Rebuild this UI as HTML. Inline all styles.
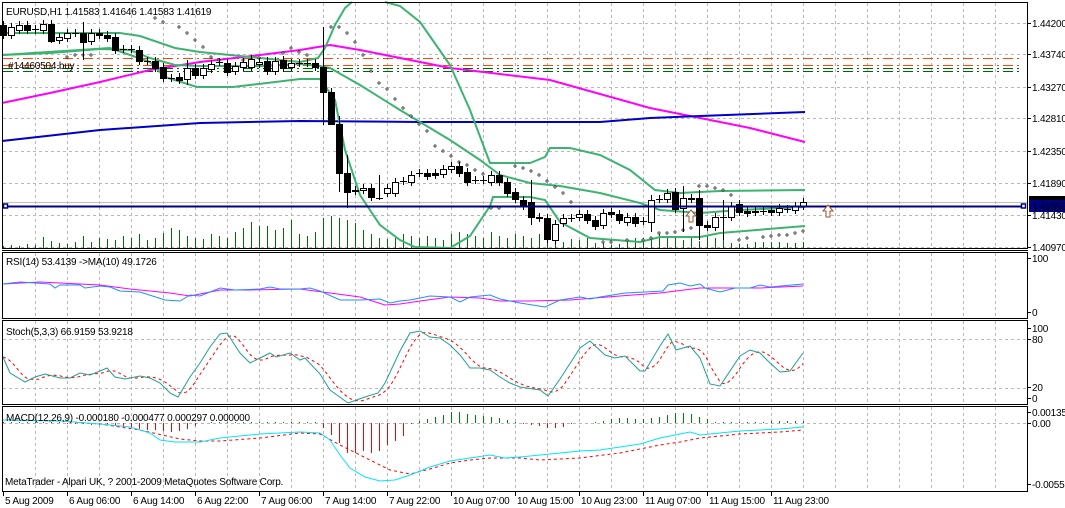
<!DOCTYPE html>
<html><head><meta charset="utf-8"><style>
html,body{margin:0;padding:0;background:#fff;width:1065px;height:508px;overflow:hidden}
svg{display:block}
text{font-family:"Liberation Sans","DejaVu Sans",sans-serif;font-size:10px;letter-spacing:-0.2px;fill:#000}
</style></head><body>
<svg id="s" width="1065" height="508" xmlns="http://www.w3.org/2000/svg">
<rect width="1065" height="508" fill="#fff"/>
<g id="grid"></g>
<g id="plots"></g>
<rect x="2.5" y="2.5" width="1025" height="246" fill="none" stroke="#000"/>
<line x1="2" y1="250.5" x2="1028" y2="250.5" stroke="#000"/>
<rect x="2.5" y="252.5" width="1025" height="66" fill="none" stroke="#000"/>
<rect x="2.5" y="320.5" width="1025" height="84" fill="none" stroke="#000"/>
<rect x="2.5" y="406.5" width="1025" height="85" fill="none" stroke="#000"/>
<text x="6" y="15">EURUSD,H1  1.41583 1.41646 1.41583 1.41619</text>
<text x="8" y="69" fill="#333">#14460504 buy</text>
<text x="6" y="265">RSI(14) 53.4139  -&gt;MA(10) 49.1726</text>
<text x="6" y="335">Stoch(5,3,3) 66.9159 53.9218</text>
<text x="6" y="421">MACD(12,26,9) -0.000180 -0.000477 0.000297 0.000000</text>
<text x="5" y="485">MetaTrader - Alpari UK, ? 2001-2009 MetaQuotes Software Corp.</text>
<g id="axis"></g>
</svg>
<script>
var NS="http://www.w3.org/2000/svg";
function el(p,t,a,txt){var e=document.createElementNS(NS,t);for(var k in a)e.setAttribute(k,a[k]);if(txt!=null)e.textContent=txt;document.getElementById(p).appendChild(e);return e;}
function pl(p,pts,c,w,da){var s=pts.map(function(q){return q[0]+","+q[1]}).join(" ");var a={points:s,fill:"none",stroke:c,"stroke-width":w||1};if(da)a["stroke-dasharray"]=da;el(p,"polyline",a);}
function interp(pts,x){for(var i=0;i<pts.length-1;i++){if(x>=pts[i][0]&&x<=pts[i+1][0]){var t=(x-pts[i][0])/(pts[i+1][0]-pts[i][0]||1);return pts[i][1]+t*(pts[i+1][1]-pts[i][1]);}}return pts[pts.length-1][1];}
var G="#b8b8b8";
for(var x=35;x<1027;x+=32){[[3,248],[253,318],[321,404],[407,491]].forEach(function(r){el("grid","line",{x1:x+.5,y1:r[0],x2:x+.5,y2:r[1],stroke:G,"stroke-dasharray":"3,3"});});}
[23,54,87,118,151,183,215,247,339,388,423].forEach(function(y){el("grid","line",{x1:3,y1:y+.5,x2:1027,y2:y+.5,stroke:G,"stroke-dasharray":"3,3"});});
var L=[["1.44200",23],["1.43740",54],["1.43270",87],["1.42810",118],["1.42350",151],["1.41890",183],["1.41430",215],["1.40970",247],["100",258],["0",312],["100",328],["80",339],["20",387],["0",398],["0.00135",412],["0.00",423],["-0.00558",484]];
L.forEach(function(l){el("axis","line",{x1:1028,y1:l[1]+.5,x2:1031,y2:l[1]+.5,stroke:"#000"});el("axis","text",{x:1032,y:l[1]+4},l[0]);});
el("axis","rect",{x:1029,y:196,width:36,height:9,fill:"#000"});
el("axis","text",{x:1032,y:205,fill:"#fff"},"1.41619");
el("axis","rect",{x:1029,y:200,width:36,height:12,fill:"#000080"});
el("axis","text",{x:1032,y:210,fill:"#fff"},"1.41553");
var T=["5 Aug 2009","6 Aug 06:00","6 Aug 14:00","6 Aug 22:00","7 Aug 06:00","7 Aug 14:00","7 Aug 22:00","10 Aug 07:00","10 Aug 15:00","10 Aug 23:00","11 Aug 07:00","11 Aug 15:00","11 Aug 23:00"];
T.forEach(function(t,i){var x=3+64*i;el("axis","line",{x1:x+.5,y1:492,x2:x+.5,y2:496,stroke:"#000"});el("axis","text",{x:x+2,y:504},t);});
el("plots","line",{x1:3,y1:58.5,x2:1022,y2:58.5,stroke:"#ff4500","stroke-dasharray":"10,4,2,4"});
el("plots","line",{x1:3,y1:65.5,x2:1022,y2:65.5,stroke:"#ff4500","stroke-dasharray":"10,4,2,4"});
el("plots","line",{x1:3,y1:68.5,x2:1022,y2:68.5,stroke:"#006400","stroke-dasharray":"10,4,2,4"});
el("plots","line",{x1:3,y1:71.5,x2:1022,y2:71.5,stroke:"#006400","stroke-dasharray":"10,4,2,4"});
el("plots","line",{x1:3,y1:202.5,x2:1027,y2:202.5,stroke:"#c0c0c0"});
var vol=[2,3,2,4,3,11,7,5,4,6,12,6,10,9,8,12,10,14,8,10,15,20,18,12,10,9,14,12,10,16,20,26,22,22,18,20,28,14,12,16,30,32,30,28,25,18,14,10,9,10,14,12,10,12,10,8,14,16,14,12,10,16,12,10,14,12,10,14,9,8,6,9,8,10,5,5,3,4,7,10,10,8,14,12,10,8,12,7,12,10,12,5,4,4,6,6,6,6,5,5,6];
vol.forEach(function(h,i){var x=3+8*i;el("plots","line",{x1:x+.5,y1:248,x2:x+.5,y2:248-h,stroke:"#007000"});});
pl("plots",[[2,103],[50,93],[100,82],[150,70],[200,62],[260,55],[300,50],[330,45],[360,50],[450,68],[550,80],[650,108],[700,118],[750,128],[805,142]],"#ff00ff",2);
pl("plots",[[2,141],[100,130],[200,123],[300,121],[420,122],[600,122],[650,118],[700,116],[805,112]],"#0000c8",2);
var BG="#3cb371";
pl("plots",[[2,33],[120,33],[140,36],[175,48],[200,52],[240,56],[280,60],[300,62],[318,58],[325,48],[335,25],[345,8],[352,2]],BG,2);
pl("plots",[[385,2],[400,6],[420,22],[450,65],[470,110],[490,163],[530,163],[545,157],[550,148],[570,148],[600,155],[630,170],[655,190],[680,193],[720,191],[805,190]],BG,2);
pl("plots",[[2,55],[50,53],[100,49],[130,50],[150,58],[175,65],[200,66],[260,66],[300,64],[320,66],[330,68],[360,85],[400,110],[450,140],[480,160],[500,175],[530,183],[560,186],[600,193],[640,203],[660,210],[700,213],[740,210],[805,207]],BG,2);
pl("plots",[[2,55],[110,48],[150,62],[165,77],[197,87],[233,87],[267,83],[300,79],[320,79],[335,100],[345,150],[360,195],[380,225],[400,240],[415,247],[450,248],[470,236],[490,206],[493,197],[530,197],[545,200],[560,222],[590,238],[640,242],[660,237],[700,237],[720,233],[805,226]],BG,2);
var sar=[[67,57],[75,55],[83,55],[91,55],[155,18],[163,22],[179,27],[187,33],[195,40],[203,47],[211,57],[219,60],[243,60],[251,60],[259,58],[283,53],[291,48],[299,52],[307,55],[331,27],[339,27],[347,33],[355,42],[363,55],[371,71],[379,83],[387,89],[395,99],[403,108],[411,116],[419,124],[427,131],[435,146],[443,151],[451,156],[459,162],[467,165],[475,170],[483,174],[491,208],[499,208],[515,166],[523,168],[531,171],[539,175],[547,181],[555,187],[563,193],[571,202],[603,242],[611,242],[627,240],[643,240],[651,238],[659,233],[667,233],[675,232],[683,230],[691,228],[699,186],[707,186],[715,188],[723,190],[731,195],[739,240],[747,238],[763,237],[771,236],[779,235],[787,235],[795,233],[803,231]];
sar.forEach(function(p){el("plots","rect",{x:p[0]-1,y:p[1]-1,width:2,height:2,fill:"#fff",stroke:"#000","stroke-width":0.6,transform:"rotate(45 "+p[0]+" "+p[1]+")"});});
var C=[[25,35,'b'],[27,35,'w'],[25,30,'w'],[25,30,'b'],[29,30,'d'],[24,30,'w'],[24,41,'b'],[37,40,'w'],[33,38,'w'],[33,33,'d'],[33,42,'b'],[33,41,'w'],[33,35,'b'],[35,38,'b'],[37,50,'b'],[49,49,'d'],[49,49,'d'],[50,61,'b'],[61,61,'d'],[61,68,'b'],[67,78,'b'],[78,78,'d'],[77,80,'b'],[68,79,'w'],[68,75,'b'],[68,75,'w'],[64,69,'w'],[62,62,'d'],[63,72,'b'],[66,71,'w'],[62,67,'w'],[59,67,'w'],[62,64,'w'],[61,71,'b'],[61,71,'w'],[60,68,'b'],[63,67,'w'],[63,63,'d'],[63,63,'d'],[63,67,'b'],[67,92,'b'],[92,124,'b'],[124,173,'b'],[173,192,'b'],[190,191,'w'],[188,190,'w'],[188,197,'b'],[198,198,'d'],[188,193,'w'],[182,193,'w'],[181,181,'d'],[175,182,'w'],[173,173,'d'],[173,176,'b'],[173,175,'b'],[169,174,'w'],[166,169,'w'],[166,173,'b'],[172,182,'b'],[180,180,'d'],[180,180,'d'],[175,182,'w'],[175,182,'b'],[182,193,'b'],[192,199,'b'],[200,206,'b'],[202,217,'b'],[217,218,'b'],[218,239,'b'],[224,240,'w'],[218,223,'w'],[218,218,'d'],[214,217,'w'],[214,220,'b'],[220,226,'b'],[213,225,'w'],[212,214,'b'],[214,220,'b'],[217,222,'w'],[217,223,'b'],[221,221,'d'],[200,222,'w'],[199,199,'d'],[193,199,'w'],[192,209,'b'],[198,208,'w'],[198,199,'b'],[198,225,'b'],[225,227,'b'],[217,227,'w'],[217,217,'d'],[206,217,'w'],[204,212,'b'],[211,213,'b'],[211,212,'w'],[211,211,'d'],[210,212,'b'],[208,212,'w'],[209,209,'d'],[206,210,'w'],[202,206,'w']];
var wk={40:[27,125],41:[88,124],42:[116,192],43:[155,208],6:[20,43],10:[22,60],23:[60,85],47:[175,200],66:[180,225],85:[186,232],87:[190,240],90:[200,240],81:[195,232]};
C.forEach(function(c,i){var x=3+8*i;var hi=c[0]-4,lo=c[1]+4;if(wk[i]){hi=wk[i][0];lo=wk[i][1];}
el("plots","line",{x1:x+.5,y1:hi,x2:x+.5,y2:lo,stroke:"#000"});
if(c[2]=='d'){el("plots","line",{x1:x-3,y1:c[0]+.5,x2:x+4,y2:c[0]+.5,stroke:"#000"});}
else el("plots","rect",{x:x-2.5,y:c[0]+.5,width:6,height:Math.max(1,c[1]-c[0]),fill:c[2]=='b'?"#000":"#fff",stroke:"#000"});});
el("plots","line",{x1:3,y1:206.5,x2:1025,y2:206.5,stroke:"#000080","stroke-width":2});
el("plots","rect",{x:3.5,y:204,width:4,height:4,fill:"#fff",stroke:"#000080","stroke-width":1.5});
el("plots","rect",{x:1021.5,y:204,width:4,height:4,fill:"#fff",stroke:"#000080","stroke-width":1.5});
[[691,210],[828,205]].forEach(function(a){var x=a[0],y=a[1];el("plots","path",{d:"M"+x+" "+y+" l5 6 h-3 v6 h-4 v-6 h-3 z",fill:"#fff",stroke:"#a0522d"});});
pl("plots",[[3,284],[40,282],[100,285],[130,289],[170,293],[190,296],[220,290],[250,290],[300,289],[330,293],[360,297],[385,305],[400,304],[420,301],[450,297],[480,298],[500,301],[530,301],[570,300],[620,296],[660,293],[700,288],[730,288],[760,288],[803,286]],"#ff00ff",1);
pl("plots",[[3,284],[20,282],[50,284],[55,288],[60,285],[80,285],[85,288],[100,286],[110,287],[120,291],[140,292],[165,300],[180,301],[190,295],[200,296],[220,288],[235,290],[260,289],[270,287],[280,289],[300,289],[310,288],[320,291],[340,300],[360,300],[380,299],[390,303],[400,301],[410,300],[430,296],[450,297],[460,302],[470,297],[490,295],[500,299],[520,303],[545,307],[560,300],[580,297],[590,299],[600,297],[625,293],[645,292],[663,291],[668,285],[680,283],[690,286],[700,284],[705,288],[720,292],[735,288],[750,288],[760,285],[770,287],[803,284]],"#1e90ff",1);
var st=[[3,357],[10,373],[25,382],[35,377],[45,374],[60,378],[70,378],[80,373],[90,375],[100,371],[107,368],[115,377],[125,379],[140,376],[150,378],[160,383],[170,393],[178,397],[190,377],[200,363],[210,347],[220,334],[227,333],[240,353],[250,363],[260,358],[270,353],[276,357],[290,353],[300,360],[305,358],[320,374],[330,390],[348,403],[365,397],[378,393],[385,383],[400,351],[410,333],[420,331],[430,337],[440,338],[450,345],[460,355],[470,368],[480,368],[490,370],[500,377],[510,383],[520,387],[540,390],[548,396],[560,379],[580,348],[590,341],[605,355],[615,358],[625,356],[640,371],[645,371],[660,346],[668,334],[676,350],[690,346],[700,358],[710,384],[720,386],[740,356],[750,350],[760,353],[770,363],[780,372],[790,371],[803,353]];
var sg=[];for(var x=3;x<=803;x+=4){var xs=x-8,v=(interp(st,Math.max(3,xs-6))+interp(st,Math.max(3,xs))+interp(st,Math.max(3,xs+6)))/3;sg.push([x,Math.round(v*10)/10]);}
pl("plots",sg,"#ff0000",1,"3,3");
pl("plots",st,"#20a090",1);
var cy=[[3,420],[60,421],[100,424],[130,427],[150,433],[160,440],[175,442],[200,442],[220,438],[260,434],[300,432],[320,433],[330,440],[340,455],[350,468],[365,477],[380,481],[395,480],[410,475],[430,467],[450,461],[470,458],[490,455],[505,458],[520,457],[540,455],[560,453],[580,451],[600,450],[620,447],[640,444],[660,438],[680,434],[690,432],[700,435],[720,433],[740,431],[760,430],[780,429],[803,427]];
var rd=[[3,420],[60,421],[100,424],[140,430],[180,439],[200,441],[220,441],[260,438],[300,433],[320,434],[340,445],[370,460],[390,470],[410,474],[430,469],[450,463],[470,460],[490,458],[520,458],[540,460],[560,459],[580,458],[620,453],[660,445],[680,442],[700,438],[720,436],[740,434],[780,432],[803,430]];
var hist=[[3,1],[60,1],[67,-1],[110,-2],[120,-4],[140,-6],[160,-8],[175,-9],[190,-5],[200,-1],[210,1],[320,1],[323,-5],[331,-12],[339,-20],[347,-30],[355,-30],[363,-28],[371,-30],[379,-28],[387,-22],[395,-18],[403,-13],[411,-1],[419,2],[427,4],[435,6],[443,8],[451,11],[459,11],[467,9],[475,8],[483,7],[491,6],[499,5],[507,3],[515,1],[523,-1],[531,-2],[539,-3],[547,-5],[555,-5],[563,-4],[571,-1],[587,0],[595,1],[603,2],[611,4],[619,5],[643,4],[651,5],[659,6],[667,8],[675,10],[683,10],[691,9],[699,6],[707,4],[715,1],[760,1],[780,2],[803,2]];
for(var i=0;i<=100;i++){var x=3+8*i;var d=Math.round(interp(hist,x));if(d==0)continue;
el("plots","line",{x1:x+.5,y1:423,x2:x+.5,y2:423-d,stroke:d>0?"#008000":"#ff0000"});}
pl("plots",rd,"#ff0000",1,"3,3");
pl("plots",cy,"#00e5ff",1);
</script>
</body></html>
